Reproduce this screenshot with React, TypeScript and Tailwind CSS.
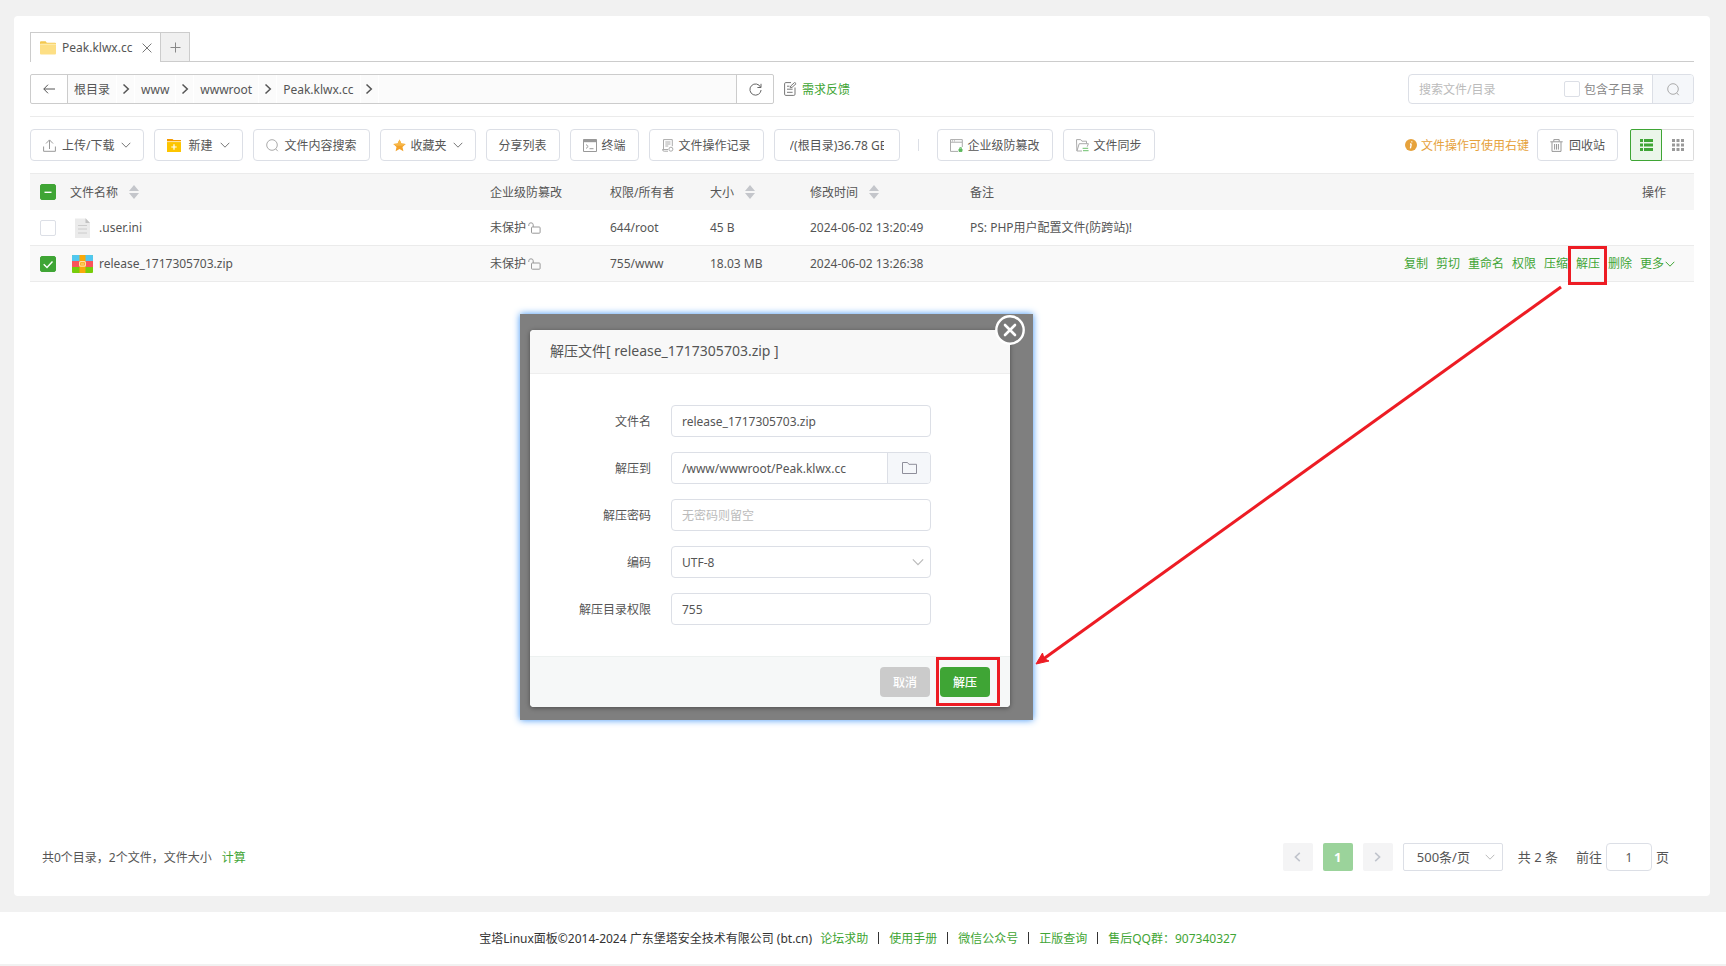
import { useState } from "react";
import type { ReactNode } from "react";

interface FileRow {
    name: string;
    kind: "text" | "zip";
    owner: string;
    size: string;
    modified: string;
    note: string;
}

const FILES: FileRow[] = [
    { name: ".user.ini", kind: "text", owner: "644/root", size: "45 B", modified: "2024-06-02 13:20:49", note: "PS: PHP用户配置文件(防跨站)!" },
    { name: "release_1717305703.zip", kind: "zip", owner: "755/www", size: "18.03 MB", modified: "2024-06-02 13:26:38", note: "" },
];

const CRUMBS = ["根目录", "www", "wwwroot", "Peak.klwx.cc"];

const ACTIONS = ["复制", "剪切", "重命名", "权限", "压缩", "解压", "删除"];

const FOOTER_LINKS = ["论坛求助", "使用手册", "微信公众号", "正版查询", "售后QQ群：907340327"];

/* ---------- icons ---------- */

function Chevron({ className = "w-[10px] h-[10px] text-[#888]" }: { className?: string }) {
    return (
        <svg className={className} viewBox="0 0 10 10" fill="none" stroke="currentColor">
            <path d="M0.7 2.8 5 7.2 9.3 2.8" />
        </svg>
    );
}

function AngleRight() {
    return (
        <svg className="w-[8px] h-[12px]" viewBox="0 0 8 12" fill="none" stroke="#555" strokeWidth="1.5">
            <path d="M1.5 1.5 6.3 6 1.5 10.5" />
        </svg>
    );
}

function TabFolderIcon() {
    return (
        <svg className="w-4 h-[14px]" viewBox="0 0 16 14">
            <path d="M0 1.2Q0 0.3 1 0.3h4.6l1.2 1.4H15q1 0 1 1V4H0z" fill="#f3c74f" />
            <rect y="2.6" width="16" height="11" rx="1" fill="#fddf85" />
            <path d="M0 3.4h16" stroke="#fff0bd" strokeWidth="0.7" />
        </svg>
    );
}

function UploadIcon() {
    return (
        <svg className="w-[13px] h-[13px]" viewBox="0 0 13 13" fill="none" stroke="#999">
            <path d="M6.5 10V1.2M3 4.5l3.5-3.6L10 4.5M0.6 7.5v4.8h11.8V7.5" />
        </svg>
    );
}

function NewFolderIcon() {
    return (
        <svg className="w-[14px] h-[13px]" viewBox="0 0 14 13">
            <path d="M0 0h5.5l1 1H14v3H0z" fill="#f59a00" />
            <rect y="2.6" width="14" height="10.4" fill="#fdc500" />
            <path d="M0 2.6h14" stroke="#fff" strokeWidth="0.7" />
            <path d="M7 5.3v5.4M4.3 8h5.4" stroke="#fff" strokeWidth="1.2" />
        </svg>
    );
}

function SearchIcon() {
    return (
        <svg className="w-[13px] h-[13px]" viewBox="0 0 13 13" fill="none" stroke="#aaa">
            <circle cx="6" cy="6" r="5.3" />
            <path d="m9.6 9.8 2.2 2.4" />
        </svg>
    );
}

function StarIcon() {
    return (
        <svg className="w-[13px] h-[13px]" viewBox="0 0 13 13">
            <path d="m6.5 0.4 1.9 4 4.3 0.5-3.2 3 0.9 4.4-3.9-2.2-3.9 2.2 0.9-4.4-3.2-3 4.3-0.5z" fill="#f3a229" />
            <path d="m6.5 0.4 1.9 4 4.3 0.5-3.2 1.8H3.4L0.3 4.9l4.3-0.5z" fill="#f7b748" />
        </svg>
    );
}

function TerminalIcon() {
    return (
        <svg className="w-[14px] h-[13px]" viewBox="0 0 14 13" fill="none" stroke="#999">
            <path d="M0.5 0.5h13v12H0.5z" />
            <path d="M0 2h14" strokeWidth="2.4" />
            <path d="m3 5.5 2.2 2L3 9.5M6.5 9.7h4" />
        </svg>
    );
}

function LogIcon() {
    return (
        <svg className="w-[12px] h-[13px]" viewBox="0 0 12 13" fill="none" stroke="#aaa">
            <path d="M6 12.2H2.2Q0.5 12.2 0.5 10.5H6M1.5 10.5V0.6h8.8v6.6" />
            <path d="M3.3 3h5.2M3.3 5h5.2M3.3 7h3" />
            <circle cx="8.9" cy="10.2" r="2" />
        </svg>
    );
}

function ShieldPageIcon() {
    return (
        <svg className="w-[13px] h-[13px]" viewBox="0 0 13 13" fill="none" stroke="#aaa">
            <path d="M8 12.4H0.5V0.6h11.8V8M0.5 3.2h11.8M2 1.9h1M4 1.9h1" />
            <path d="M9 10h3v2.4H9z" fill="#5eb95e" stroke="#5eb95e" />
            <path d="M9.8 9.8V8.6h1.6v1.2" stroke="#5eb95e" strokeWidth="0.8" />
        </svg>
    );
}

function SyncFolderIcon() {
    return (
        <svg className="w-[13px] h-[13px]" viewBox="0 0 13 13" fill="none" stroke="#aaa">
            <path d="M6 12H0.9L0.5 0.6h4.2l1.2 1.6h4.6v2.4M1 11.8 3.2 4.7h9.2l-1.2 3" />
            <path d="M6.6 9.3h5.6M7 11.7h5.6" stroke="#6cc06c" />
        </svg>
    );
}

function TrashIcon() {
    return (
        <svg className="w-[13px] h-[13px]" viewBox="0 0 13 13" fill="none" stroke="#999">
            <path d="M0.3 2.8h12.4M3.8 2.5V0.6h5.4v1.9M2 3v9.4h9V3M4.6 5v5.6M6.5 5v5.6M8.4 5v5.6" />
        </svg>
    );
}

function FeedbackIcon() {
    return (
        <svg className="w-[13px] h-[14px]" viewBox="0 0 13 14" fill="none" stroke="#777">
            <path d="M7 0.6H1.8Q0.6 0.6 0.6 1.8v10.4q0 1.2 1.2 1.2h8q1.2 0 1.2-1.2V5.5" />
            <path d="M3 4.2h2.5M3 7.2h5.6M3 10.3h5.6M6.2 5.7 6.7 4l4-3.6 1.4 1.3-4 3.6z" />
        </svg>
    );
}

function UnlockIcon() {
    return (
        <svg className="w-[13px] h-[12px]" viewBox="0 0 13 12" fill="none" stroke="#999">
            <rect x="3.5" y="5" width="8.6" height="6.2" rx="0.8" />
            <path d="M5.2 5V2.8Q5.2 0.8 3 0.8T0.8 2.8V4" />
        </svg>
    );
}

function TextFileIcon() {
    return (
        <svg className="w-[15px] h-5" viewBox="0 0 15 20">
            <path d="M0 0.5h11L15 5v15H0z" fill="#ebebeb" />
            <path d="M10.5 0.3V5H15z" fill="#c2c2c2" />
            <path d="M3 7.5h9M3 11h9M3 15h9" stroke="#ccc" />
        </svg>
    );
}

function ZipIcon() {
    return (
        <svg className="w-[21px] h-[18px]" viewBox="0 0 21 18">
            <rect width="21" height="18" rx="1" fill="#77cc0a" />
            <path d="M0 1Q0 0 1 0h19q1 0 1 1v5H0z" fill="#51c8ef" />
            <path d="M0 6h21v6H0z" fill="#f9545a" />
            <path d="M7.5 0h6v18h-6z" fill="#f9a90a" />
            <rect x="7.6" y="6.6" width="5.8" height="4.6" rx="1" fill="none" stroke="#ffe3a0" strokeWidth="1.2" />
            <path d="M9 9h3" stroke="#ffe3a0" />
        </svg>
    );
}

function SortIcon() {
    return (
        <svg className="w-[10px] h-[14px]" viewBox="0 0 10 14" fill="#c4c6cb">
            <path d="M0 6 5 0l5 6zM0 8h10l-5 6z" />
        </svg>
    );
}

/* ---------- small controls ---------- */

function ToolButton({ icon, menu, children }: { icon?: ReactNode; menu?: boolean; children: ReactNode }) {
    return (
        <button className="h-8 px-3 flex items-center gap-[5px] border border-[#dcdfe6] rounded bg-white whitespace-nowrap">
            {icon}
            {children}
            {menu && <Chevron className="w-[10px] h-[10px] ml-px text-[#777]" />}
        </button>
    );
}

interface CheckProps {
    id: string;
    label: string;
    checked: boolean;
    partial?: boolean;
    onChange: (v: boolean) => void;
}

function Check({ id, label, checked, partial, onChange }: CheckProps) {
    return (
        <span className="relative block w-4 h-4">
            <input
                id={id}
                type="checkbox"
                aria-label={label}
                checked={checked}
                onChange={(e) => onChange(e.target.checked)}
                className="block w-4 h-4 appearance-none rounded-xs border border-[#dcdfe6] bg-white checked:bg-[#3fa535] checked:border-[#3fa535]"
            />
            {checked && (
                <svg className="absolute inset-0 pointer-events-none" viewBox="0 0 16 16" fill="none" stroke="#fff" strokeWidth="1.4">
                    <path d={partial ? "M4.5 8.3h7" : "M3.7 8.3 7 11.4 12.5 5.5"} />
                </svg>
            )}
        </span>
    );
}

function Field({ id, label, children }: { id: string; label: string; children: ReactNode }) {
    return (
        <div className="flex items-center gap-5">
            <label htmlFor={id} className="w-[121px] text-right">
                {label}
            </label>
            <div className="flex w-[260px] h-8 border border-[#dcdfe6] rounded bg-white overflow-hidden">{children}</div>
        </div>
    );
}

/* ---------- dialog ---------- */

function ExtractDialog() {
    const [name, setName] = useState("release_1717305703.zip");
    const [target, setTarget] = useState("/www/wwwroot/Peak.klwx.cc");
    const [password, setPassword] = useState("");
    const [mode, setMode] = useState("755");

    return (
        <div className="absolute left-[520px] top-[314px] w-[513px] pl-[10px] pr-[23px] pt-4 pb-[13px] bg-[#7f7f7f] shadow-[0_0_7px_#3f95f5]">
            <div role="dialog" aria-labelledby="extract-title" className="relative rounded bg-white shadow-[0_1px_5px_rgba(0,0,0,0.4)]">
                <h2 id="extract-title" className="h-11 px-5 pb-[2px] flex items-center text-[14px] bg-[#f8f8f8] border-b border-[#eee] rounded-t">
                    解压文件[ release_1717305703.zip ]
                </h2>
                <button aria-label="关闭" className="absolute -top-[15px] -right-[15px] w-[30px] h-[30px]">
                    <svg viewBox="0 0 30 30" fill="#7a7a7a" stroke="#fff" strokeLinecap="round">
                        <circle cx="15" cy="15" r="13.7" strokeWidth="2.4" />
                        <path d="m10 10 10 10M20 10 10 20" strokeWidth="2.6" />
                    </svg>
                </button>

                <form className="flex flex-col gap-[15px] pt-[31px] pb-[31px]">
                    <Field id="f-name" label="文件名">
                        <input id="f-name" value={name} onChange={(e) => setName(e.target.value)} className="flex-1 min-w-0 px-[10px] outline-none" />
                    </Field>
                    <Field id="f-target" label="解压到">
                        <input id="f-target" value={target} onChange={(e) => setTarget(e.target.value)} className="flex-1 min-w-0 px-[10px] outline-none" />
                        <button type="button" aria-label="选择目录" className="w-[43px] grid place-items-center bg-[#f5f7fa] border-l border-[#dcdfe6]">
                            <svg className="w-[15px] h-3" viewBox="0 0 15 12" fill="none" stroke="#8f8f9b">
                                <path d="M0.5 0.5h5l1.4 1.8h7.6v9.2h-14z" />
                            </svg>
                        </button>
                    </Field>
                    <Field id="f-pass" label="解压密码">
                        <input
                            id="f-pass"
                            value={password}
                            placeholder="无密码则留空"
                            onChange={(e) => setPassword(e.target.value)}
                            className="flex-1 min-w-0 px-[10px] outline-none placeholder:text-[#bbb]"
                        />
                    </Field>
                    <Field id="f-code" label="编码">
                        <span className="relative flex flex-1">
                            <select id="f-code" defaultValue="UTF-8" className="flex-1 px-[10px] appearance-none outline-none">
                                <option>UTF-8</option>
                                <option>GBK</option>
                            </select>
                            <Chevron className="absolute right-[6px] top-[9px] w-3 h-3 text-[#bbb] pointer-events-none" />
                        </span>
                    </Field>
                    <Field id="f-mode" label="解压目录权限">
                        <input id="f-mode" value={mode} onChange={(e) => setMode(e.target.value)} className="flex-1 min-w-0 px-[10px] outline-none" />
                    </Field>
                </form>

                <div className="flex justify-end gap-[10px] px-5 py-[10px] bg-[#f6f8f8] border-t border-[#edf1f0] rounded-b font-medium text-white">
                    <button className="w-[50px] h-[30px] rounded bg-[#cbcbcb]">取消</button>
                    <span className="relative">
                        <button className="block w-[50px] h-[30px] rounded bg-[#3fa535]">解压</button>
                        <span className="absolute -left-1 -right-[10px] -top-[10px] -bottom-[9px] border-3 border-[#ed1c24] pointer-events-none" />
                    </span>
                </div>
            </div>
        </div>
    );
}

/* ---------- page ---------- */

export default function App() {
    const [selected, setSelected] = useState<string[]>(["release_1717305703.zip"]);
    const [includeSub, setIncludeSub] = useState(false);
    const [keyword, setKeyword] = useState("");
    const [page, setPage] = useState("1");

    const toggle = (name: string, on: boolean) => {
        setSelected((prev) => (on ? [...prev, name] : prev.filter((n) => n !== name)));
    };

    return (
        <div className="relative min-h-screen flex flex-col bg-[#f1f1f1] pb-[2px] text-[12px] leading-[17px] text-[#555] font-['Noto_Sans','Noto_Sans_CJK_SC',sans-serif]">
            <main className="flex-1 flex flex-col mt-4 mb-4 ml-[14px] mr-4 p-4 bg-white rounded">
                {/* Tabs */}
                <div className="flex items-end border-b border-[#ccc]">
                    <div className="-mb-px h-[30px] w-[131px] pl-[9px] pr-2 flex items-center gap-[6px] border border-b-0 border-[#ccc] bg-white whitespace-nowrap">
                        <TabFolderIcon />
                        <span className="flex-1">Peak.klwx.cc</span>
                        <button aria-label="关闭标签">
                            <svg className="w-[10px] h-[10px]" viewBox="0 0 10 10" stroke="#777">
                                <path d="m0.6 0.6 8.8 8.8M9.4 0.6 0.6 9.4" />
                            </svg>
                        </button>
                    </div>
                    <button aria-label="新建标签" className="h-[29px] w-[29px] grid place-items-center bg-[#f0f0f0] border-t border-r border-[#ccc]">
                        <svg className="w-[11px] h-[11px]" viewBox="0 0 11 11" stroke="#888">
                            <path d="M5.5 0.5v10M0.5 5.5h10" />
                        </svg>
                    </button>
                </div>

                {/* Path bar */}
                <div className="flex items-center justify-between pt-3 pb-3 border-b border-[#ebebeb]">
                    <div className="flex items-center">
                        <div className="flex h-[30px] w-[744px] border border-[#ccc] rounded-xs">
                            <button aria-label="返回" className="w-[37px] grid place-items-center border-r border-[#ccc]">
                                <svg className="w-3 h-[10px]" viewBox="0 0 12 10" fill="none" stroke="#555">
                                    <path d="M0.8 5H12M5 0.7 0.8 5 5 9.3" />
                                </svg>
                            </button>
                            <nav className="flex flex-1 bg-[#fbfbfb]">
                                {CRUMBS.map((crumb) => (
                                    <span key={crumb} className="flex">
                                        <a href="#" className="flex items-center px-[6px] border-r border-white">
                                            {crumb}
                                        </a>
                                        <span className="w-[18px] grid place-items-center border-r border-white">
                                            <AngleRight />
                                        </span>
                                    </span>
                                ))}
                            </nav>
                            <button aria-label="刷新" className="w-[37px] grid place-items-center border-l border-[#ccc]">
                                <svg className="w-[13px] h-[13px]" viewBox="0 0 13 13" fill="none" stroke="#666">
                                    <path d="M11.6 4.2A5.6 5.6 0 1 0 12.1 7M12 0.8v3.7H8.4" />
                                </svg>
                            </button>
                        </div>
                        <a href="#" className="ml-[10px] flex items-center gap-[5px] text-[#3fa535]">
                            <FeedbackIcon />
                            需求反馈
                        </a>
                    </div>

                    <div className="flex w-[286px] h-[30px] border border-[#dcdfe6] rounded overflow-hidden">
                        <input
                            aria-label="搜索文件/目录"
                            placeholder="搜索文件/目录"
                            value={keyword}
                            onChange={(e) => setKeyword(e.target.value)}
                            className="flex-1 min-w-0 pl-[10px] outline-none placeholder:text-[#bbb]"
                        />
                        <div className="flex items-center gap-1 pr-2 text-[#888]">
                            <Check id="include-sub" label="包含子目录" checked={includeSub} onChange={setIncludeSub} />
                            <label htmlFor="include-sub">包含子目录</label>
                        </div>
                        <button aria-label="搜索" className="w-[41px] grid place-items-center bg-[#f5f7fa] border-l border-[#dcdfe6]">
                            <SearchIcon />
                        </button>
                    </div>
                </div>

                {/* Toolbar */}
                <div className="flex items-center justify-between py-3">
                    <div className="flex items-center gap-[10px]">
                        <ToolButton icon={<UploadIcon />} menu>
                            <span className="px-px">上传/下载</span>
                        </ToolButton>
                        <ToolButton icon={<NewFolderIcon />} menu>
                            <span className="px-[2px]">新建</span>
                        </ToolButton>
                        <ToolButton icon={<SearchIcon />}>文件内容搜索</ToolButton>
                        <ToolButton icon={<StarIcon />} menu>收藏夹</ToolButton>
                        <ToolButton>分享列表</ToolButton>
                        <ToolButton icon={<TerminalIcon />}>终端</ToolButton>
                        <ToolButton icon={<LogIcon />}>文件操作记录</ToolButton>
                        <ToolButton>
                            <span className="w-[94px] mx-[3px] overflow-hidden text-left">/(根目录)36.78 GB</span>
                        </ToolButton>
                        <span className="w-px h-3 mx-2 bg-[#dcdfe6]" />
                        <ToolButton icon={<ShieldPageIcon />}>企业级防篡改</ToolButton>
                        <ToolButton icon={<SyncFolderIcon />}>文件同步</ToolButton>
                    </div>

                    <div className="flex items-center">
                        <span className="flex items-center gap-1 mr-2 text-[#e6a23c]">
                            <svg className="w-3 h-3" viewBox="0 0 12 12">
                                <circle cx="6" cy="6" r="6" fill="#e6a23c" />
                                <path d="M6.9 2.3 6.7 3.4M6.3 5 5.4 9.4M5 5h1.4" stroke="#fff" strokeWidth="1.3" />
                            </svg>
                            文件操作可使用右键
                        </span>
                        <button className="h-8 px-3 flex items-center gap-[6px] border border-[#dcdfe6] rounded">
                            <TrashIcon />
                            回收站
                        </button>
                        <button aria-label="列表视图" className="ml-3 w-8 h-8 grid place-items-center bg-[#ebf6ea] border border-[#3fa535] rounded-l-xs">
                            <svg className="w-[13px] h-3" viewBox="0 0 13 12" fill="#3fa535">
                                <path d="M0 0h3v3H0zM4 0h9v3H4zM0 4.5h3v3H0zM4 4.5h9v3H4zM0 9h3v3H0zM4 9h9v3H4z" />
                            </svg>
                        </button>
                        <button aria-label="图标视图" className="w-8 h-8 grid place-items-center border border-l-0 border-[#dcdcdc] rounded-r-xs">
                            <svg className="w-3 h-3" viewBox="0 0 12 12" fill="#999">
                                <path d="M0 0h3v3H0zM4.5 0h3v3h-3zM9 0h3v3H9zM0 4.5h3v3H0zM4.5 4.5h3v3h-3zM9 4.5h3v3H9zM0 9h3v3H0zM4.5 9h3v3h-3zM9 9h3v3H9z" />
                            </svg>
                        </button>
                    </div>
                </div>

                {/* File list */}
                <table className="w-full table-fixed border-separate border-spacing-0 text-left">
                    <colgroup>
                        <col className="w-[30px]" />
                        <col className="w-[420px]" />
                        <col className="w-[120px]" />
                        <col className="w-[100px]" />
                        <col className="w-[100px]" />
                        <col className="w-[160px]" />
                        <col />
                        <col className="w-[340px]" />
                    </colgroup>
                    <thead>
                        <tr className="h-[37px] bg-[#f6f6f6] [&>th]:border-t [&>th]:border-[#ebebeb] [&>th]:font-normal [&>th]:pl-[10px]">
                            <th>
                                <Check
                                    id="check-all"
                                    label="全选"
                                    checked={selected.length > 0}
                                    partial={selected.length < FILES.length}
                                    onChange={(on) => setSelected(on ? FILES.map((f) => f.name) : [])}
                                />
                            </th>
                            <th><span className="flex items-center gap-[11px]">文件名称 <SortIcon /></span></th>
                            <th>企业级防篡改</th>
                            <th>权限/所有者</th>
                            <th><span className="flex items-center gap-[11px]">大小 <SortIcon /></span></th>
                            <th><span className="flex items-center gap-[11px]">修改时间 <SortIcon /></span></th>
                            <th>备注</th>
                            <th className="pr-7 text-right">操作</th>
                        </tr>
                    </thead>
                    <tbody>
                        {FILES.map((file) => {
                            const on = selected.includes(file.name);
                            return (
                                <tr key={file.name} className={`h-9 [&>td]:border-b [&>td]:border-[#ebebeb] [&>td]:pl-[10px] ${on ? "bg-[#f9f9f9]" : ""}`}>
                                    <td>
                                        <Check id={`check-${file.name}`} label={file.name} checked={on} onChange={(v) => toggle(file.name, v)} />
                                    </td>
                                    <td>
                                        <span className="flex items-center gap-[5px]">
                                            <span className="w-6 grid place-items-center">{file.kind === "zip" ? <ZipIcon /> : <TextFileIcon />}</span>
                                            <a href="#">{file.name}</a>
                                        </span>
                                    </td>
                                    <td><span className="flex items-center gap-[2px]">未保护<UnlockIcon /></span></td>
                                    <td>{file.owner}</td>
                                    <td>{file.size}</td>
                                    <td>{file.modified}</td>
                                    <td>{file.note}</td>
                                    <td className="pr-[19px]">
                                        {on && (
                                            <span className="flex justify-end gap-2 text-[#3fa535] whitespace-nowrap">
                                                {ACTIONS.map((action) => (
                                                    <a key={action} href="#" className="relative">
                                                        {action}
                                                        {action === "解压" && (
                                                            <span className="absolute -left-2 -right-[7px] -top-[9px] -bottom-[13px] border-3 border-[#ed1c24] pointer-events-none" />
                                                        )}
                                                    </a>
                                                ))}
                                                <a href="#" className="flex items-center gap-px">
                                                    更多
                                                    <Chevron className="w-[10px] h-[10px] text-[#3fa535]" />
                                                </a>
                                            </span>
                                        )}
                                    </td>
                                </tr>
                            );
                        })}
                    </tbody>
                </table>

                {/* Summary and pager */}
                <div className="mt-auto mb-[9px] pl-3 pr-[25px] flex items-center justify-between">
                    <p>
                        共0个目录，2个文件，文件大小
                        <a href="#" className="ml-[10px] text-[#3fa535]">计算</a>
                    </p>
                    <div className="flex items-center text-[13px]">
                        <button aria-label="上一页" disabled className="w-[30px] h-7 grid place-items-center bg-[#f4f4f5] rounded-xs">
                            <svg className="w-[7px] h-[10px]" viewBox="0 0 7 10" fill="none" stroke="#c0c4cc" strokeWidth="1.6">
                                <path d="M5.8 0.8 1.4 5l4.4 4.2" />
                            </svg>
                        </button>
                        <button className="mx-[10px] w-[30px] h-7 rounded-xs bg-[#9bd39b] font-bold text-white">1</button>
                        <button aria-label="下一页" disabled className="w-[30px] h-7 grid place-items-center bg-[#f4f4f5] rounded-xs">
                            <svg className="w-[7px] h-[10px]" viewBox="0 0 7 10" fill="none" stroke="#c0c4cc" strokeWidth="1.6">
                                <path d="M1.2 0.8 5.6 5 1.2 9.2" />
                            </svg>
                        </button>
                        <span className="relative ml-[10px]">
                            <select aria-label="每页条数" className="block w-[100px] h-7 pl-[13px] appearance-none border border-[#dcdfe6] rounded-xs bg-white">
                                <option>500条/页</option>
                                <option>1000条/页</option>
                            </select>
                            <Chevron className="absolute right-2 top-[9px] w-[10px] h-[10px] text-[#bbb] pointer-events-none" />
                        </span>
                        <span className="ml-[15px]">共 2 条</span>
                        <label htmlFor="goto" className="ml-[18px] mr-1">前往</label>
                        <input
                            id="goto"
                            value={page}
                            onChange={(e) => setPage(e.target.value)}
                            className="w-[46px] h-7 border border-[#dcdfe6] rounded text-center text-[12px]"
                        />
                        <span className="ml-1">页</span>
                    </div>
                </div>
            </main>

            <footer className="h-[52px] flex items-center justify-center bg-white pr-[10px] text-[#333]">
                <span className="mr-2">宝塔Linux面板©2014-2024 广东堡塔安全技术有限公司 (bt.cn)</span>
                {FOOTER_LINKS.map((link, i) => (
                    <span key={link} className="flex items-center">
                        {i > 0 && <span className="w-px h-3 mx-[10px] bg-[#333]" />}
                        <a href="#" className="text-[#3fa535]">{link}</a>
                    </span>
                ))}
            </footer>

            <ExtractDialog />

            {/* Pointer from the row action to the dialog */}
            <svg className="absolute left-[1030px] top-[280px] w-[540px] h-[390px] pointer-events-none" viewBox="0 0 540 390">
                <path d="M531 7 12 380" stroke="#ed1c24" strokeWidth="3" />
                <path d="M6 384 12.5 373 14 378.5 19 381z" fill="#ed1c24" stroke="#ed1c24" />
            </svg>
        </div>
    );
}
